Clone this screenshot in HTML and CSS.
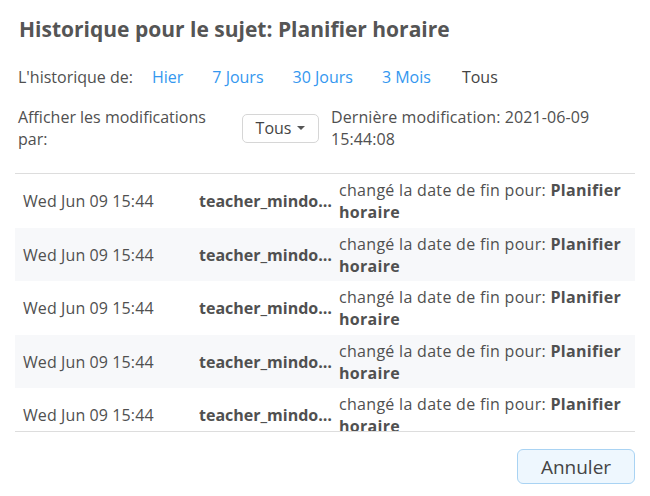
FILE: index.html
```html
<!DOCTYPE html>
<html lang="fr">
<head>
<meta charset="UTF-8">
<meta name="viewport" content="width=device-width, initial-scale=1.0">
<title>Historique pour le sujet</title>
<link rel="stylesheet" href="styles.css">
</head>
<body>

<div class="dialog">
    <h2 class="titre">Historique pour le sujet: Planifier horaire</h2>

    <div class="filtre">
        <span class="filtre-label">L'historique de:</span>
        <a class="periode">Hier</a>
        <a class="periode">7 Jours</a>
        <a class="periode">30 Jours</a>
        <a class="periode">3 Mois</a>
        <span class="periode actif">Tous</span>
    </div>

    <div class="auteurs">
        <span class="auteurs-label">Afficher les modifications par:</span>
        <button class="choix">Tous <span class="caret"></span></button>
        <span class="derniere">Dernière modification: 2021-06-09 15:44:08</span>
    </div>

    <div class="liste" id="liste"></div>

    <div class="actions">
        <button class="annuler">Annuler</button>
    </div>
</div>

<script>
var liste = document.getElementById("liste");
for (var i = 0; i < 31; i++) {
    var ligne = document.createElement("div");
    ligne.className = "ligne";
    ligne.innerHTML =
        '<span class="date">Wed Jun 09 15:44</span>' +
        '<span class="user">teacher_mindomo_test</span>' +
        '<span class="action">changé la date de fin pour: <b>Planifier horaire</b></span>';
    liste.appendChild(ligne);
}
</script>

</body>
</html>
```

FILE: styles.css
```css
body {
    font-family: "Open Sans", "Noto Sans", sans-serif;
    background-color: #fff;
    color: #505050;
    margin: 0;
    padding: 0;
}

.dialog {
    padding: 13px 15px 0 15px;
}

.titre {
    margin: 0 0 0 4px;
    font-size: 21px;
    font-weight: bold;
    line-height: 32px;
    color: #555;
}

.filtre {
    display: flex;
    align-items: center;
    margin: 21px 0 0 3px;
    font-size: 16px;
    line-height: 22px;
}

.filtre-label {
    margin-right: 19px;
}

.periode {
    color: #3497ef;
    margin-right: 29px;
    cursor: pointer;
}

.periode.actif {
    color: #444;
    margin-left: 2px;
}

.auteurs {
    display: flex;
    align-items: center;
    margin: 18px 0 0 3px;
    font-size: 16px;
    line-height: 22px;
}

.auteurs-label {
    width: 200px;
    flex-shrink: 0;
    margin-right: 24px;
}

.choix {
    font-family: inherit;
    font-size: 16px;
    color: #444;
    background-color: #fff;
    border: 1px solid #d6d6d6;
    border-radius: 5px;
    width: 77px;
    height: 29px;
    padding: 0;
    display: flex;
    align-items: center;
    justify-content: center;
    gap: 6px;
}

.caret {
    width: 0;
    height: 0;
    border-left: 4px solid transparent;
    border-right: 4px solid transparent;
    border-top: 4px solid #555;
}

.derniere {
    margin-left: 12px;
    width: 280px;
    letter-spacing: 0.1px;
}

.liste {
    margin-top: 23px;
    height: 257px;
    overflow-y: scroll;
    border-top: 1px solid #ddd;
    border-bottom: 1px solid #ddd;
}

.liste::-webkit-scrollbar {
    width: 11px;
}

.liste::-webkit-scrollbar-thumb {
    background-color: #c4c4c6;
}

.liste::-webkit-scrollbar-track {
    background-color: #fff;
}

.ligne {
    display: flex;
    align-items: center;
    font-size: 16px;
    line-height: 22px;
    padding: 5px 0 4.5px 8px;
}

.ligne:nth-child(even) {
    background-color: #f7f8fa;
}

.date {
    width: 176px;
    flex-shrink: 0;
    letter-spacing: 0.1px;
}

.user {
    width: 140px;
    flex-shrink: 0;
    font-weight: bold;
    white-space: nowrap;
    overflow: hidden;
    text-overflow: ellipsis;
}

.action {
    padding-right: 2px;
    letter-spacing: 0.3px;
}

.action b {
    font-weight: bold;
}

.actions {
    display: flex;
    justify-content: flex-end;
    margin-top: 17px;
}

.annuler {
    font-family: inherit;
    font-size: 19px;
    color: #444;
    background-color: #eef7fe;
    border: 1px solid #a9d3f3;
    border-radius: 6px;
    width: 118px;
    height: 35px;
    cursor: pointer;
}
```
